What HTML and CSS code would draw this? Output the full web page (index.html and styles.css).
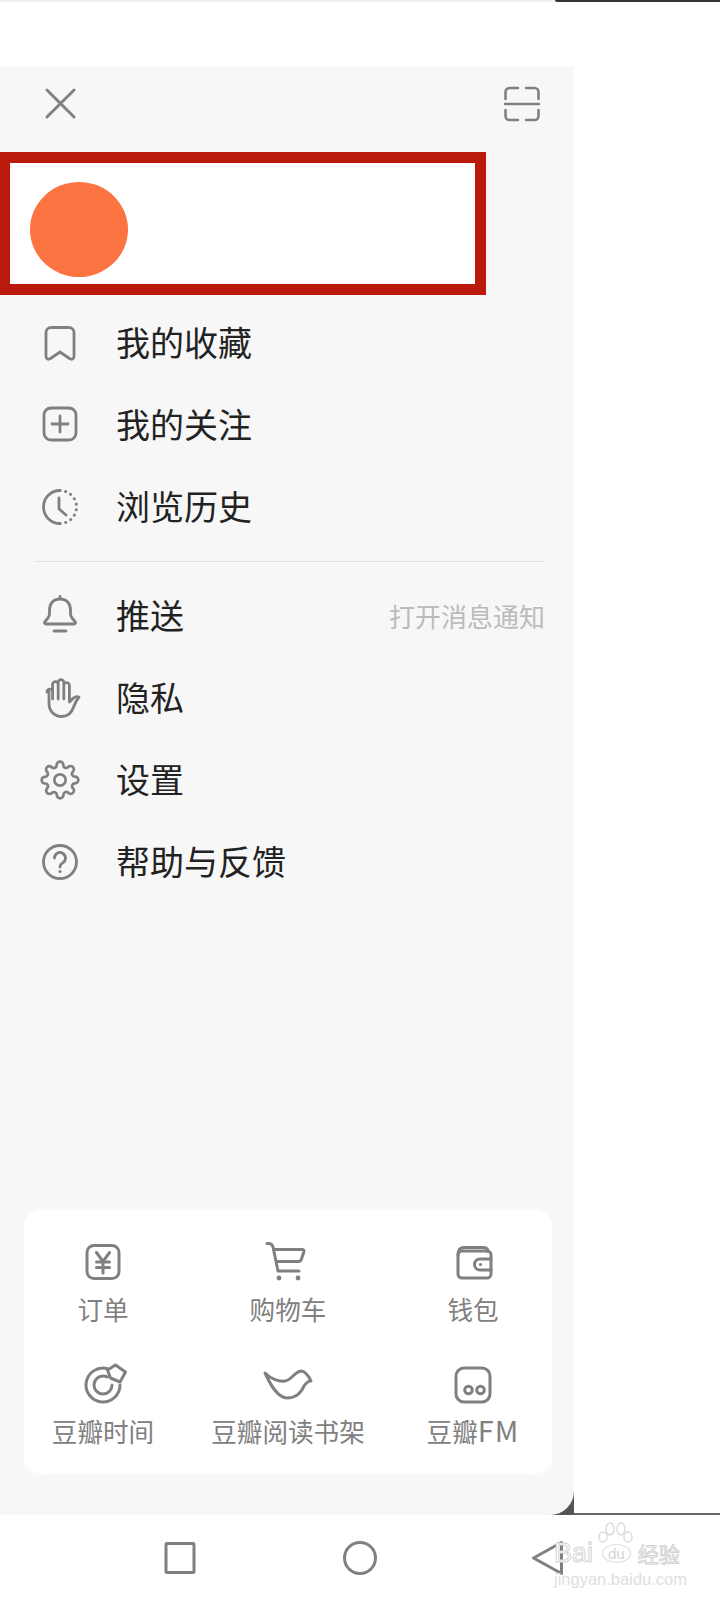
FILE: index.html
```html
<!DOCTYPE html>
<html lang="zh-CN">
<head>
  <meta charset="UTF-8" />
  <meta name="viewport" content="width=device-width, initial-scale=1.0" />
  <title>豆瓣菜单</title>
  <link rel="stylesheet" href="styles.css">
</head>
<body>
  <div class="status-line"><span class="status-left"></span><span class="status-right"></span></div>
  <div class="status-space"></div>

  <div class="screen">
    <div class="drawer">
      <div class="panel">
        <div class="panel-head">
          <svg class="icon-close" viewBox="0 0 32 32"><path d="M2 2l28 28M30 2L2 30"/></svg>
          <svg class="icon-scan" viewBox="0 0 36 36">
            <path d="M1.5 13V6a4 4 0 0 1 4-4H14M22 2h8.500a4 4 0 0 1 4 4v7M1 18h34M1.500 24v6a4 4 0 0 0 4 4H14M22 34h8.500a4 4 0 0 0 4-4v-6"/>
          </svg>
        </div>

        <div class="profile"><div class="avatar"></div></div>

        <ul class="menu first">
          <li class="row">
            <svg class="icon" viewBox="0 0 40 40"><path d="M11 4.500h18a5 5 0 0 1 5 5v24c0 2.500-2.500 3.500-4.500 2L20 29l-9.500 6.500c-2 1.500-4.500.5-4.500-2v-24a5 5 0 0 1 5-5z"/></svg>
            <span class="row-text">我的收藏</span>
          </li>
          <li class="row">
            <svg class="icon" viewBox="0 0 40 40"><rect x="4" y="3" width="32" height="32" rx="7"/><path d="M20 11v16M12 19h16"/></svg>
            <span class="row-text">我的关注</span>
          </li>
          <li class="row">
            <svg class="icon" viewBox="0 0 40 40">
              <path d="M20 3.500a16.500 16.500 0 0 0 0 33"/>
              <path class="dots" d="M20 3.500a16.500 16.500 0 0 1 0 33"/>
              <path d="M19 11v11l7 6"/>
            </svg>
            <span class="row-text">浏览历史</span>
          </li>
        </ul>

        <div class="divider"></div>

        <ul class="menu second">
          <li class="row">
            <svg class="icon" viewBox="0 0 40 40">
              <path d="M20 4c-7 0-10.500 5-10.500 11v4c0 3-2 5-4.500 7.500-1.200 1.200-.4 2.500 1 2.500h28c1.400 0 2.200-1.300 1-2.500-2.500-2.500-4.500-4.500-4.500-7.500v-4C30.500 9 27 4 20 4zM20 1.500V4M14 36h12"/>
            </svg>
            <span class="row-text">推送</span>
            <span class="row-hint">打开消息通知</span>
          </li>
          <li class="row">
            <svg class="icon icon-low" viewBox="0 0 40 40">
              <path d="M7 13a2.800 2.800 0 0 1 5.600 0v7M12.600 20V5.500a2.800 2.800 0 0 1 5.600 0V20M18.200 20V3.500a2.800 2.800 0 0 1 5.600 0V20M23.800 20V6.500a2.800 2.800 0 0 1 5.600 0V23l3.500-3.500c1.700-1.600 4-2.200 6.100-1.500-1.800 2.200-3.800 5.200-5.200 9.500-2 6-6 10-12 10-7 0-12.800-5-12.800-13V13"/>
            </svg>
            <span class="row-text">隐私</span>
          </li>
          <li class="row">
            <svg class="icon icon-gear" viewBox="0 0 24 24">
              <circle cx="12" cy="12" r="3.400"/>
              <path d="M19.400 15a1.650 1.650 0 0 0 .33 1.820l.06.06a2 2 0 0 1 0 2.830 2 2 0 0 1-2.830 0l-.06-.06a1.650 1.650 0 0 0-1.820-.33 1.650 1.650 0 0 0-1 1.510V21a2 2 0 0 1-2 2 2 2 0 0 1-2-2v-.09A1.650 1.650 0 0 0 9 19.400a1.650 1.650 0 0 0-1.820.33l-.06.06a2 2 0 0 1-2.830 0 2 2 0 0 1 0-2.830l.06-.06a1.650 1.650 0 0 0 .33-1.820 1.650 1.650 0 0 0-1.510-1H3a2 2 0 0 1-2-2 2 2 0 0 1 2-2h.09A1.650 1.650 0 0 0 4.600 9a1.650 1.650 0 0 0-.33-1.820l-.06-.06a2 2 0 0 1 0-2.830 2 2 0 0 1 2.830 0l.06.06a1.650 1.650 0 0 0 1.820.33H9a1.650 1.650 0 0 0 1-1.510V3a2 2 0 0 1 2-2 2 2 0 0 1 2 2v.09a1.650 1.650 0 0 0 1 1.510 1.650 1.650 0 0 0 1.820-.33l.06-.06a2 2 0 0 1 2.830 0 2 2 0 0 1 0 2.830l-.06.06a1.650 1.650 0 0 0-.33 1.820V9a1.650 1.650 0 0 0 1.510 1H21a2 2 0 0 1 2 2 2 2 0 0 1-2 2h-.09a1.650 1.650 0 0 0-1.510 1z"/>
            </svg>
            <span class="row-text">设置</span>
          </li>
          <li class="row">
            <svg class="icon icon-low" viewBox="0 0 40 40">
              <circle cx="20" cy="19" r="16.500"/>
              <path d="M14.500 15a5.500 5.500 0 1 1 8.500 4.600c-2 1.300-3 2.400-3 4.400"/>
              <circle class="solid" cx="20" cy="28.500" r="1.600"/>
            </svg>
            <span class="row-text">帮助与反馈</span>
          </li>
        </ul>

        <div class="shortcuts">
          <div class="shortcut">
            <svg class="tile-icon" viewBox="0 0 40 40"><rect x="4" y="3.500" width="32" height="33" rx="7"/><path d="M13.500 10.500l6.500 9 6.500-9M20 19.500V31M13.500 20h13M13.500 25.500h13"/></svg>
            <span>订单</span>
          </div>
          <div class="shortcut">
            <svg class="tile-icon wide" viewBox="0 0 48 40">
              <path d="M3 1.500h1.500c2.500 0 4 1.200 4.500 3.500l5 24h21M10 7.500h28c1.500 0 2.300 1 1.800 2.500l-2.300 7c-.5 1.500-1.500 2.500-3 2.500H12"/>
              <circle class="solid" cx="15" cy="36" r="2.400"/><circle class="solid" cx="34" cy="36" r="2.400"/>
            </svg>
            <span>购物车</span>
          </div>
          <div class="shortcut">
            <svg class="tile-icon" viewBox="0 0 40 40">
              <rect x="5" y="9" width="33" height="27" rx="4"/>
              <path d="M5 13c0-5 2-7.500 6-7.500h19c3 0 5 1.500 5 4M38 17H27a5.500 5.500 0 0 0 0 11h11"/>
              <circle class="solid" cx="27.500" cy="22.500" r="1.600"/>
            </svg>
            <span>钱包</span>
          </div>
          <div class="shortcut">
            <svg class="tile-icon" viewBox="0 0 40 40">
              <path d="M24 4.500A17 17 0 1 0 37 21"/>
              <path d="M29 21a9 9 0 1 1-9-9c1.500 0 3 .4 4.500 1"/>
              <path d="M24.500 6l8-5 10 7-5.500 10-9.500-4z"/>
            </svg>
            <span>豆瓣时间</span>
          </div>
          <div class="shortcut">
            <svg class="tile-icon wide" viewBox="0 0 48 40">
              <path d="M1 9c6 6 14 9 20 8 7-1 9-9 16-10 4 0 7 4 10 10-3 0-5 2-7 5-3 7-9 12-17 12-9 0-16-12-22-25z"/>
            </svg>
            <span>豆瓣阅读书架</span>
          </div>
          <div class="shortcut">
            <svg class="tile-icon" viewBox="0 0 40 40">
              <rect x="3" y="4" width="34" height="34" rx="8"/>
              <circle cx="15.500" cy="26" r="3.800"/><circle cx="27.500" cy="26" r="3.800"/>
            </svg>
            <span>豆瓣<span class="latin">FM</span></span>
          </div>
        </div>
      </div>
    </div>
    <div class="backdrop"></div>
  </div>

  <div class="navbar">
    <svg class="nav-icon" viewBox="0 0 34 34"><rect x="3" y="2.500" width="28" height="29" rx="1"/></svg>
    <svg class="nav-icon" viewBox="0 0 34 34"><circle cx="17" cy="17" r="15.500"/></svg>
    <svg class="nav-icon" viewBox="0 0 34 34"><path d="M30.500 1.500v31L2.500 17z"/></svg>
  </div>

  <div class="watermark">
    <svg class="paw" viewBox="0 0 42 32">
      <ellipse cx="9" cy="15" rx="4" ry="5"/><ellipse cx="16" cy="7" rx="4" ry="6"/>
      <ellipse cx="27" cy="7" rx="4" ry="6"/><ellipse cx="34" cy="15" rx="4" ry="5"/>
    </svg>
    <div class="wm-line">
      <span class="wm-bai">Bai</span><span class="wm-du">du</span><span class="wm-cn">经验</span>
    </div>
    <div class="wm-url">jingyan.baidu.com</div>
  </div>
</body>
</html>
```

FILE: styles.css
```css
/* Global styles */
* {
  box-sizing: border-box;
}
body {
  position: relative;
  width: 720px;
  height: 1600px;
  margin: 0;
  overflow: hidden;
  background: #fff;
  font-family: "Noto Sans CJK SC", "Liberation Sans", sans-serif;
}
svg {
  fill: none;
  stroke: #808080;
  stroke-linecap: round;
  stroke-linejoin: round;
  overflow: visible;
}
svg .solid {
  fill: #808080;
  stroke: none;
}

/* Top edge of the phone */
.status-line {
  display: flex;
  height: 2px;
}
.status-left {
  flex: 1;
  background: #f0f0f0;
}
.status-right {
  width: 165px;
  background: #333;
  border-bottom-left-radius: 4px;
}
.status-space {
  height: 64px;
}

/* Drawer */
.screen {
  display: flex;
  height: 1449px;
}
.drawer {
  width: 574px;
  background: linear-gradient(#555, #555) no-repeat right bottom / 24px 24px;
}
.backdrop {
  flex: 1;
  border-bottom: 2px solid #666;
}
.panel {
  display: flex;
  flex-direction: column;
  height: 100%;
  background: #f7f7f7;
  border-bottom-right-radius: 24px;
}
.panel-head {
  display: flex;
  justify-content: space-between;
  align-items: flex-start;
  height: 86px;
  padding: 22px 34px 0 45px;
}
.icon-close {
  width: 31px;
  height: 31px;
  stroke-width: 3;
}
.icon-scan {
  width: 36px;
  height: 36px;
  margin-top: -2px;
  stroke-width: 2.600;
}

/* Redacted profile block */
.profile {
  display: flex;
  align-items: center;
  width: 486px;
  height: 143px;
  padding-left: 20px;
  background: #fff;
  border: 11px solid #b91a0b;
  border-left-width: 10px;
}
.avatar {
  width: 98px;
  height: 95px;
  margin-top: 12px;
  border-radius: 50%;
  background: #fd7443;
}

/* Menu rows */
.menu {
  list-style: none;
  margin: 0;
  padding: 0;
}
.menu.first {
  margin-top: 7px;
}
.row {
  display: flex;
  align-items: center;
  height: 82px;
  padding: 0 29px 0 40px;
  color: #222;
  font-size: 34px;
}
.row-text {
  margin-top: -4px;
}
.second .row-text {
  margin-top: -2px;
}
.icon {
  flex: none;
  width: 40px;
  height: 40px;
  margin-right: 36px;
  stroke-width: 2.800;
}
.icon-low {
  margin-top: 4px;
}
.icon-gear {
  margin-top: 2px;
  stroke-width: 1.600;
}
.dots {
  stroke-dasharray: 0.1 5.600;
  stroke-width: 3;
}
.row-hint {
  margin-left: auto;
  color: #bbb;
  font-size: 26px;
}
.divider {
  height: 1px;
  margin: 13px 29px 12px 34px;
  background: #dfe2e2;
}

/* Shortcut card */
.shortcuts {
  display: grid;
  grid-template-columns: 158px 212px 158px;
  row-gap: 37px;
  width: 528px;
  margin: auto 0 41px 24px;
  padding: 32px 0 25px;
  background: #fff;
  border-radius: 18px;
  box-shadow: 0 0 10px #fbfbfb;
}
.shortcut {
  display: flex;
  flex-direction: column;
  align-items: center;
  color: #808080;
  font-size: 25.600px;
  line-height: 36px;
}
.latin {
  font-size: 29px;
  line-height: 1;
  letter-spacing: 1px;
}
.tile-icon {
  width: 40px;
  height: 40px;
  margin-bottom: 9px;
  stroke-width: 3;
}
.tile-icon.wide {
  width: 48px;
}

/* Android navigation bar */
.navbar {
  display: grid;
  grid-template-columns: 180px 188px 34px;
  align-items: center;
  height: 85px;
  padding: 1px 0 0 163px;
}
.nav-icon {
  width: 34px;
  height: 34px;
  stroke-width: 3;
}

/* Baidu watermark sits on top of the nav bar */
.watermark {
  position: absolute;
  left: 554px;
  top: 1522px;
  width: 128px;
  font-family: "Liberation Sans", "Noto Sans CJK SC", sans-serif;
  color: #fff;
}
.paw {
  position: absolute;
  left: 40px;
  top: 0;
  width: 42px;
  height: 32px;
  stroke: #dcdcdc;
  stroke-width: 1.500;
}
.wm-line {
  display: flex;
  align-items: center;
  height: 28px;
  margin-top: 17px;
  white-space: nowrap;
}
.wm-bai {
  font-size: 27px;
  line-height: 28px;
  -webkit-text-stroke: 1px #d4d4d4;
}
.wm-du {
  margin-left: 9px;
  padding: 0 5px;
  border: 1.500px solid #dcdcdc;
  border-radius: 50%;
  color: #d4d4d4;
  font-size: 15px;
  line-height: 17px;
}
.wm-cn {
  margin-left: 7px;
  font-size: 21px;
  font-family: "Noto Sans CJK SC", sans-serif;
  line-height: 24px;
  -webkit-text-stroke: 1px #d4d4d4;
}
.wm-url {
  margin-top: 2px;
  color: #e0e0e0;
  font-size: 16.500px;
  line-height: 20px;
  white-space: nowrap;
}
```
